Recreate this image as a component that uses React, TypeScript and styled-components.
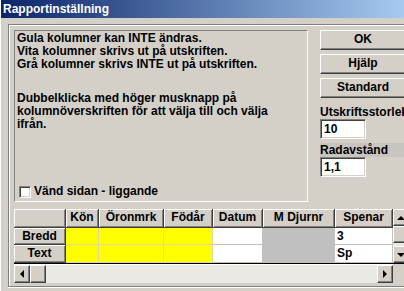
import React from "react";
import styled, { createGlobalStyle } from "styled-components";

const Global = createGlobalStyle`
  html, body { margin: 0; padding: 0; overflow: hidden; background: #d4d0c8; }
  * { box-sizing: border-box; }
`;

const FONT = `"Liberation Sans", Arial, sans-serif`;

const Window = styled.div`
  width: 404px;
  height: 291px;
  background: #d4d0c8;
  display: flex;
  flex-direction: column;
  overflow: hidden;
  font-family: ${FONT};
  font-weight: bold;
  font-size: 12px;
  color: #000;
  border-left: 1px solid #ffffff;
`;

const TitleBar = styled.div`
  height: 18px;
  flex: none;
  background: linear-gradient(to right, #0a246a, #a6caf0);
  color: #fff;
  line-height: 18px;
  padding-left: 2px;
  font-size: 12px;
  white-space: nowrap;
`;

const Body = styled.div`
  flex: 1;
  padding: 6px 0 4px 7px;
  display: flex;
  min-height: 0;
`;

const Frame = styled.div`
  flex: 1;
  border-top: 1px solid #808080;
  border-left: 1px solid #808080;
  border-bottom: 1px solid #808080;
  box-shadow: inset 1px 1px 0 #ffffff, 0 1px 0 #ffffff;
  padding: 5px 0 0 5px;
  display: flex;
  flex-direction: column;
  gap: 7px;
  overflow: hidden;
`;

const TopRow = styled.div`
  display: flex;
  gap: 12px;
  align-items: flex-start;
`;

const InfoBox = styled.div`
  width: 294px;
  height: 172px;
  flex: none;
  border-top: 1px solid #808080;
  border-left: 1px solid #808080;
  border-right: 1px solid #ffffff;
  border-bottom: 1px solid #ffffff;
  padding: 1px 2px 3px 2px;
  display: flex;
  flex-direction: column;
`;

const Para = styled.div<{ $top?: number }>`
  line-height: 13px;
  margin-top: ${(p) => p.$top ?? 0}px;
  white-space: pre-line;
`;

const CheckRow = styled.label`
  margin-top: auto;
  display: flex;
  align-items: center;
  gap: 3px;
  padding-left: 2px;
  line-height: 13px;
`;

const CheckBox = styled.span`
  width: 12px;
  height: 12px;
  background: #fff;
  border-top: 1px solid #808080;
  border-left: 1px solid #808080;
  border-right: 1px solid #ffffff;
  border-bottom: 1px solid #ffffff;
  box-shadow: inset 1px 1px 0 #404040, inset -1px -1px 0 #d4d0c8;
`;

const RightCol = styled.div`
  width: 86px;
  flex: none;
  display: flex;
  flex-direction: column;
`;

const Button = styled.div`
  height: 20px;
  margin-bottom: 4px;
  background: #d4d0c8;
  border-top: 1px solid #ffffff;
  border-left: 1px solid #ffffff;
  border-bottom: 1px solid #404040;
  border-right: 1px solid #404040;
  box-shadow: inset -1px -1px 0 #808080;
  text-align: center;
  line-height: 17px;
  white-space: nowrap;
`;

const FieldLabel = styled.div<{ $shade?: boolean }>`
  margin-top: ${(p) => (p.$shade ? 4 : 3)}px;
  height: 14px;
  line-height: 14px;
  white-space: nowrap;
  background: ${(p) => (p.$shade ? "#c8c5c0" : "transparent")};
`;

const Input = styled.div`
  width: 46px;
  height: 20px;
  background: #fff;
  border-top: 1px solid #808080;
  border-left: 1px solid #808080;
  border-right: 1px solid #ffffff;
  border-bottom: 1px solid #ffffff;
  box-shadow: inset 1px 1px 0 #404040, inset -1px -1px 0 #d4d0c8;
  padding-left: 3px;
  line-height: 18px;
`;

const GridArea = styled.div`
  display: flex;
  align-items: flex-start;
`;

const GridLeft = styled.div`
  display: flex;
  flex-direction: column;
`;

const Table = styled.div`
  display: grid;
  grid-template-columns: 52px 33px 65px 49px 50px 72px 58px;
  grid-template-rows: 19px 17px 18px;
  border-bottom: 1px solid #000;
`;

const HeadCell = styled.div`
  background: #d4d0c8;
  border-right: 1px solid #404040;
  border-bottom: 1px solid #404040;
  box-shadow: inset 1px 1px 0 #ffffff, inset -1px -1px 0 #808080;
  text-align: center;
  line-height: 17px;
  white-space: nowrap;
  overflow: hidden;
`;

const DataCell = styled.div<{ $bg: string; $line: string }>`
  background: ${(p) => p.$bg};
  border-right: 1px solid ${(p) => p.$line};
  border-bottom: 1px solid ${(p) => p.$line};
  padding-left: 2px;
  line-height: 16px;
`;

const HScroll = styled.div`
  height: 19px;
  display: flex;
  background: #ebe9e4;
  border-top: 1px solid #ffffff;
`;

const SBtn = styled.div<{ $w?: number }>`
  width: ${(p) => p.$w ?? 16}px;
  height: 100%;
  flex: none;
  background: #d4d0c8;
  border-top: 1px solid #ffffff;
  border-left: 1px solid #ffffff;
  border-bottom: 1px solid #404040;
  border-right: 1px solid #404040;
  box-shadow: inset -1px -1px 0 #808080;
  display: flex;
  align-items: center;
  justify-content: center;
`;

const Track = styled.div`
  flex: 1;
`;

const VScroll = styled.div`
  width: 16px;
  height: 55px;
  flex: none;
  display: flex;
  flex-direction: column;
  background: #ebe9e4;
  border-bottom: 1px solid #000;
`;

const VBtn = styled(SBtn)`
  height: 17px;
  width: 100%;
`;

const Arrow = ({ dir }: { dir: "l" | "r" | "u" | "d" }) => {
  const pts = {
    l: "4,0 4,8 0,4",
    r: "0,0 0,8 4,4",
    u: "0,4 8,4 4,0",
    d: "0,0 8,0 4,4",
  }[dir];
  const horiz = dir === "l" || dir === "r";
  return (
    <svg width={horiz ? 4 : 8} height={horiz ? 8 : 4} viewBox={horiz ? "0 0 4 8" : "0 0 8 4"}>
      <polygon points={pts} fill="#000" />
    </svg>
  );
};

const YELLOW = "#ffff00";
const cols = [
  { name: "Kön", bg: YELLOW, line: "#d8d8a8" },
  { name: "Öronmrk", bg: YELLOW, line: "#d8d8a8" },
  { name: "Födår", bg: YELLOW, line: "#d8d8a8" },
  { name: "Datum", bg: "#ffffff", line: "#c0c0c0" },
  { name: "M Djurnr", bg: "#c0c0c0", line: "#c0c0c0" },
  { name: "Spenar", bg: "#ffffff", line: "#c0c0c0" },
];
const rows = [
  { name: "Bredd", vals: ["", "", "", "", "", "3"] },
  { name: "Text", vals: ["", "", "", "", "", "Sp"] },
];

export default function App() {
  return (
    <>
      <Global />
      <Window>
        <TitleBar>Rapportinställning</TitleBar>
        <Body>
          <Frame>
            <TopRow>
              <InfoBox>
                <Para>
                  {"Gula kolumner kan INTE ändras.\nVita kolumner skrivs ut på utskriften.\nGrå kolumner skrivs INTE ut på utskriften."}
                </Para>
                <Para $top={21}>
                  {"Dubbelklicka med höger musknapp på\nkolumnöverskriften för att välja till och välja\nifrån."}
                </Para>
                <CheckRow>
                  <CheckBox />
                  Vänd sidan - liggande
                </CheckRow>
              </InfoBox>
              <RightCol>
                <Button>OK</Button>
                <Button>Hjälp</Button>
                <Button>Standard</Button>
                <FieldLabel>Utskriftsstorlek</FieldLabel>
                <Input>10</Input>
                <FieldLabel $shade>Radavstånd</FieldLabel>
                <Input>1,1</Input>
              </RightCol>
            </TopRow>
            <GridArea>
              <GridLeft>
                <Table>
                  <HeadCell />
                  {cols.map((c) => (
                    <HeadCell key={c.name}>{c.name}</HeadCell>
                  ))}
                  {rows.map((r) => (
                    <React.Fragment key={r.name}>
                      <HeadCell>{r.name}</HeadCell>
                      {cols.map((c, i) => (
                        <DataCell key={c.name} $bg={c.bg} $line={c.line}>
                          {r.vals[i]}
                        </DataCell>
                      ))}
                    </React.Fragment>
                  ))}
                </Table>
                <HScroll>
                  <SBtn><Arrow dir="l" /></SBtn>
                  <SBtn />
                  <Track />
                  <SBtn><Arrow dir="r" /></SBtn>
                </HScroll>
              </GridLeft>
              <VScroll>
                <VBtn><Arrow dir="u" /></VBtn>
                <VBtn />
                <Track />
                <VBtn><Arrow dir="d" /></VBtn>
              </VScroll>
            </GridArea>
          </Frame>
        </Body>
      </Window>
    </>
  );
}
